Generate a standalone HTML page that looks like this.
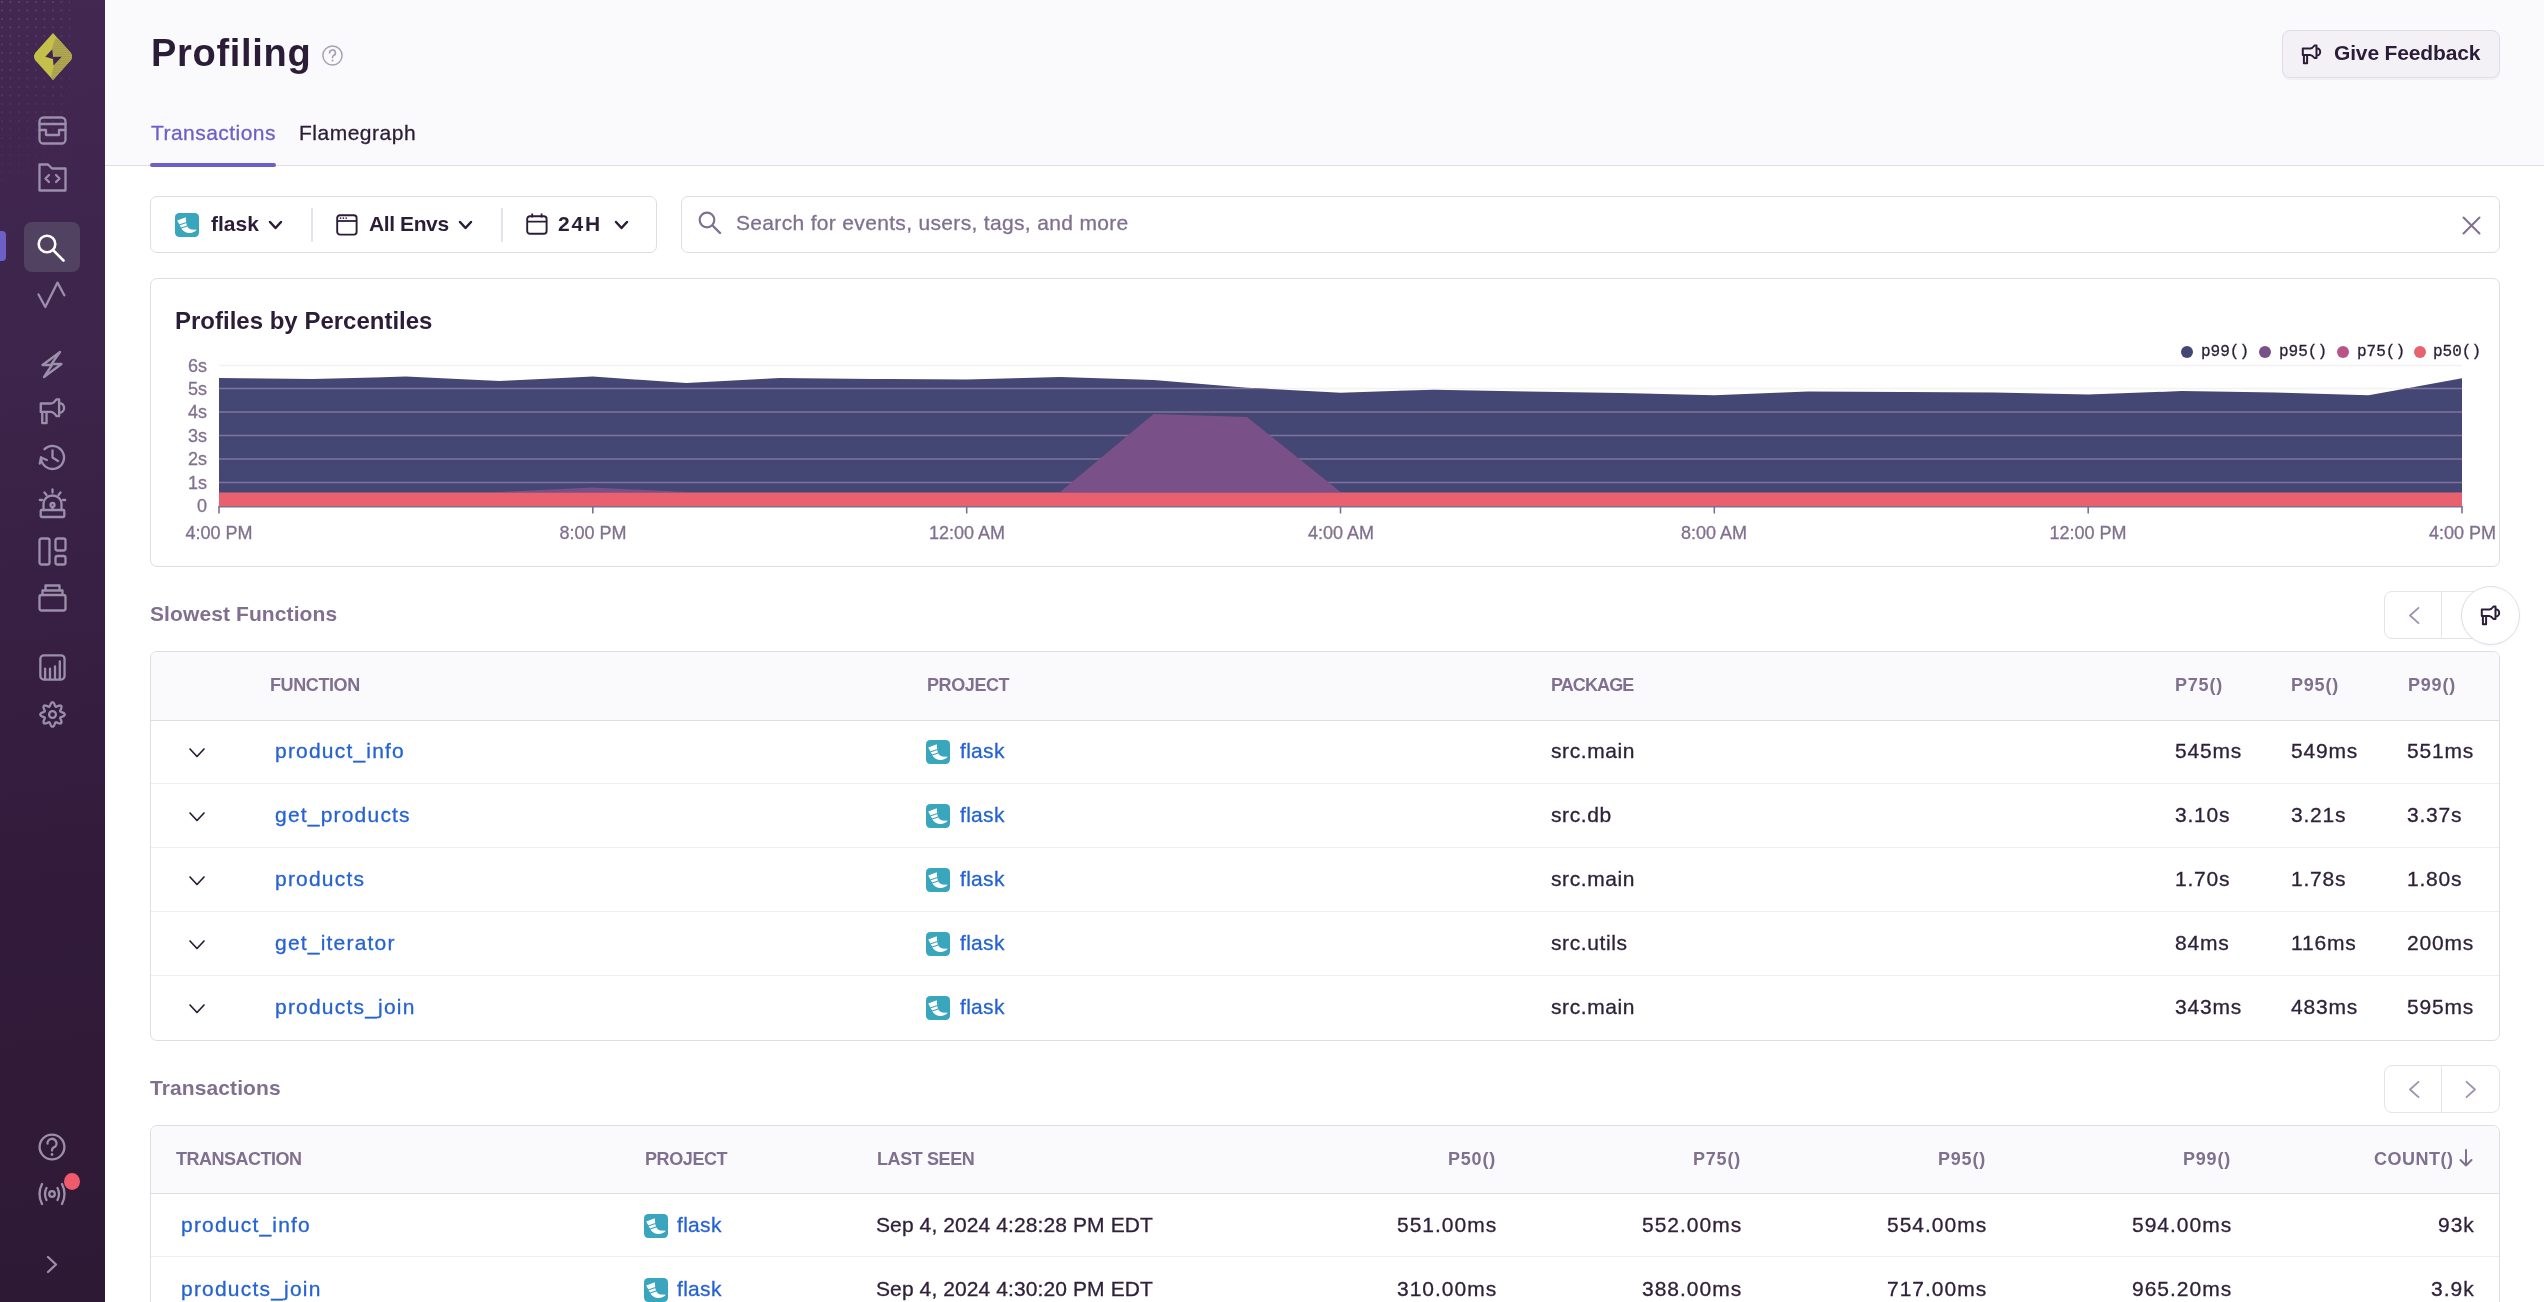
<!DOCTYPE html>
<html><head><meta charset="utf-8">
<style>
*{box-sizing:border-box;margin:0;padding:0}
html,body{width:2544px;height:1302px;overflow:hidden;background:#fff;font-family:"Liberation Sans",sans-serif;color:#3e3446}
.a{position:absolute;white-space:nowrap;line-height:1;will-change:transform}
.n{-webkit-text-stroke:0.3px currentColor}
.ico{position:absolute;display:block}
#sb{position:absolute;left:0;top:0;width:105px;height:1302px;background:linear-gradient(172deg,#432852 0%,#3c244a 30%,#321b3b 65%,#2e1935 100%)}
#hdr{position:absolute;left:105px;top:0;width:2439px;height:166px;background:#faf9fb;border-bottom:1.5px solid #e0dce5}
.box{position:absolute;border:1.5px solid #e0dce5;border-radius:7px;background:#fff}
</style></head><body>
<div id="sb"></div>
<div style="position:absolute;left:0;top:0;width:70px;height:330px;background-image:radial-gradient(circle at 2px 2px, rgba(200,170,220,0.2) 0.9px, transparent 1.3px);background-size:8.5px 8.5px;-webkit-mask-image:linear-gradient(150deg,#000 0%,rgba(0,0,0,0.5) 30%,transparent 62%)"></div>
<svg class="ico" style="left:30px;top:31px" width="46" height="52" viewBox="0 0 46 52">
<defs><pattern id="ht" width="2" height="2" patternUnits="userSpaceOnUse"><rect width="2" height="2" fill="#c4c04a"/><circle cx="1" cy="1" r="0.62" fill="#5a3f5e"/></pattern>
<clipPath id="lg"><path d="M23 2 L40.5 21.5 Q43.5 25.5 40.5 29.5 L23 49 L5.5 29.5 Q2.5 25.5 5.5 21.5 Z"/></clipPath></defs>
<path d="M23 2 L40.5 21.5 Q43.5 25.5 40.5 29.5 L23 49 L5.5 29.5 Q2.5 25.5 5.5 21.5 Z" fill="#c4c04a"/>
<g clip-path="url(#lg)"><path d="M25 8 L22 17 L25 30 L21.5 44 L21 52 L50 52 L50 0 Z" fill="url(#ht)"/></g>
<path d="M22.25 18.25 L23.25 26 L31.75 25.75 L23.5 34.5 L23 28 L15.25 25.75 Z" fill="#3e2650"/>
</svg>
<svg class="ico" style="left:38px;top:116px" width="29" height="29" viewBox="0 0 29 29"><rect x="1.5" y="1.5" width="26" height="26" rx="4" fill="none" stroke="#9b8fab" stroke-width="2.3" stroke-linecap="round" stroke-linejoin="round"/><path d="M1.5 8 H27.5 M1.5 14 H8 V19 H21 V14 H27.5" fill="none" stroke="#9b8fab" stroke-width="2.3" stroke-linecap="round" stroke-linejoin="round"/></svg>
<svg class="ico" style="left:38px;top:163px" width="29" height="29" viewBox="0 0 29 29"><path d="M1.5 1.5 H10 L14 5.5 H27.5 V27.5 H1.5 Z" fill="none" stroke="#9b8fab" stroke-width="2.3" stroke-linecap="round" stroke-linejoin="round"/><path d="M11 12 L7.5 15.5 L11 19 M18 12 L21.5 15.5 L18 19" fill="none" stroke="#9b8fab" stroke-width="2.3" stroke-linecap="round" stroke-linejoin="round"/></svg>
<div style="position:absolute;left:24px;top:222px;width:56px;height:50px;border-radius:8px;background:#524262"></div>
<div style="position:absolute;left:0;top:231px;width:6px;height:30px;border-radius:0 4px 4px 0;background:#6c5fc7"></div>
<svg class="ico" style="left:37px;top:233px" width="30" height="30" viewBox="0 0 30 30"><circle cx="10" cy="11" r="8.3" fill="none" stroke="#fff" stroke-width="2.6"/><path d="M16 17 L26.5 27.5" stroke="#fff" stroke-width="2.6" stroke-linecap="round"/></svg>
<svg class="ico" style="left:37px;top:281px" width="30" height="28" viewBox="0 0 30 28"><path d="M1.5 13.5 L8.3 26 L20.5 1.6 L27.3 14.3" fill="none" stroke="#9b8fab" stroke-width="2.3" stroke-linecap="round" stroke-linejoin="round"/></svg>
<svg class="ico" style="left:39px;top:349px" width="26" height="31" viewBox="0 0 26 31"><path d="M21 3 L3.5 16 H13 L5 28 L22.5 15 H12.5 Z" fill="none" stroke="#9b8fab" stroke-width="2.3" stroke-linecap="round" stroke-linejoin="round"/></svg>
<svg class="ico" style="left:36.6px;top:396px" width="32.2" height="30.8" viewBox="0 0 24 23"><path d="M2.8 5.6 H10.3 Q12.3 5.6 14.5 2.5 H16.5 V15 H14.5 Q12.3 11.9 10.3 11.9 H2.8 Z M16.5 5.2 A3.7 3.7 0 0 1 16.5 12.6 M3.9 11.9 V20.2 H7.1 V11.9" fill="none" stroke="#9b8fab" stroke-width="1.75" stroke-linejoin="round"/></svg>
<svg class="ico" style="left:38px;top:443px" width="29" height="29" viewBox="0 0 29 29"><path d="M3 14.5 A11.5 11.5 0 1 0 6.5 6.2" fill="none" stroke="#9b8fab" stroke-width="2.3" stroke-linecap="round" stroke-linejoin="round"/><path d="M1.8 20.5 L3 14.5 L8.8 17" fill="none" stroke="#9b8fab" stroke-width="2.3" stroke-linecap="round" stroke-linejoin="round"/><path d="M14.5 7.5 V14.5 L20 18" fill="none" stroke="#9b8fab" stroke-width="2.3" stroke-linecap="round" stroke-linejoin="round"/></svg>
<svg class="ico" style="left:37px;top:486px" width="31" height="33" viewBox="0 0 31 33"><rect x="3.7" y="24" width="23.6" height="7" rx="1" fill="none" stroke="#9b8fab" stroke-width="2.3" stroke-linecap="round" stroke-linejoin="round"/><path d="M6.5 24 V17.5 A9 8 0 0 1 24.5 17.5 V24" fill="none" stroke="#9b8fab" stroke-width="2.3" stroke-linecap="round" stroke-linejoin="round"/><circle cx="15.5" cy="19" r="2" fill="none" stroke="#9b8fab" stroke-width="2.3" stroke-linecap="round" stroke-linejoin="round"/><path d="M15.5 21 V24 M15.5 3.5 V6.5 M7.5 6.5 L9.5 9 M23.5 6.5 L21.5 9 M2.8 14 H5 M26 14 H28.2" fill="none" stroke="#9b8fab" stroke-width="2.3" stroke-linecap="round" stroke-linejoin="round"/></svg>
<svg class="ico" style="left:38px;top:537px" width="29" height="29" viewBox="0 0 29 29"><rect x="1.5" y="1.5" width="10" height="26" rx="2" fill="none" stroke="#9b8fab" stroke-width="2.3" stroke-linecap="round" stroke-linejoin="round"/><rect x="17.5" y="1.5" width="10" height="12" rx="2" fill="none" stroke="#9b8fab" stroke-width="2.3" stroke-linecap="round" stroke-linejoin="round"/><rect x="17.5" y="19" width="10" height="8.5" rx="2" fill="none" stroke="#9b8fab" stroke-width="2.3" stroke-linecap="round" stroke-linejoin="round"/></svg>
<svg class="ico" style="left:38px;top:584px" width="29" height="28" viewBox="0 0 29 28"><rect x="1.5" y="11" width="26" height="15.5" rx="2" fill="none" stroke="#9b8fab" stroke-width="2.3" stroke-linecap="round" stroke-linejoin="round"/><path d="M4.5 11 V6.5 H24.5 V11 M7.5 6.5 V1.5 H21.5 V6.5" fill="none" stroke="#9b8fab" stroke-width="2.3" stroke-linecap="round" stroke-linejoin="round"/></svg>
<svg class="ico" style="left:38px;top:653px" width="29" height="29" viewBox="0 0 29 29"><rect x="2.35" y="2.35" width="24.2" height="24.2" rx="3.5" fill="none" stroke="#9b8fab" stroke-width="2.3" stroke-linecap="round" stroke-linejoin="round"/><path d="M7.1 26 V15.6 M12 26 V15.6 M17 26 V13.3 M21.8 26 V8.3" fill="none" stroke="#9b8fab" stroke-width="2.3" stroke-linecap="round" stroke-linejoin="round"/></svg>
<svg class="ico" style="left:37.8px;top:700px" width="29" height="29" viewBox="0 0 29 29"><polygon points="26.70,14.50 26.52,15.13 26.01,15.71 25.25,16.20 24.38,16.60 23.53,16.92 22.83,17.21 22.38,17.53 22.21,17.93 22.31,18.48 22.60,19.17 22.97,20.00 23.31,20.90 23.49,21.78 23.44,22.55 23.13,23.13 22.55,23.44 21.78,23.49 20.90,23.31 20.00,22.97 19.18,22.60 18.48,22.31 17.93,22.21 17.53,22.38 17.21,22.83 16.92,23.53 16.60,24.38 16.20,25.25 15.71,26.01 15.13,26.52 14.50,26.70 13.87,26.52 13.29,26.01 12.80,25.25 12.40,24.38 12.08,23.53 11.79,22.83 11.47,22.38 11.07,22.21 10.52,22.31 9.83,22.60 9.00,22.97 8.10,23.31 7.22,23.49 6.45,23.44 5.87,23.13 5.56,22.55 5.51,21.78 5.69,20.90 6.03,20.00 6.40,19.17 6.69,18.48 6.79,17.93 6.62,17.53 6.17,17.21 5.47,16.92 4.62,16.60 3.75,16.20 2.99,15.71 2.48,15.13 2.30,14.50 2.48,13.87 2.99,13.29 3.75,12.80 4.62,12.40 5.47,12.08 6.17,11.79 6.62,11.47 6.79,11.07 6.69,10.52 6.40,9.83 6.03,9.00 5.69,8.10 5.51,7.22 5.56,6.45 5.87,5.87 6.45,5.56 7.22,5.51 8.10,5.69 9.00,6.03 9.82,6.40 10.52,6.69 11.07,6.79 11.47,6.62 11.79,6.17 12.08,5.47 12.40,4.62 12.80,3.75 13.29,2.99 13.87,2.48 14.50,2.30 15.13,2.48 15.71,2.99 16.20,3.75 16.60,4.62 16.92,5.47 17.21,6.17 17.53,6.62 17.93,6.79 18.48,6.69 19.18,6.40 20.00,6.03 20.90,5.69 21.78,5.51 22.55,5.56 23.13,5.87 23.44,6.45 23.49,7.22 23.31,8.10 22.97,9.00 22.60,9.83 22.31,10.52 22.21,11.07 22.38,11.47 22.83,11.79 23.53,12.08 24.38,12.40 25.25,12.80 26.01,13.29 26.52,13.87" fill="none" stroke="#9b8fab" stroke-width="2.3" stroke-linecap="round" stroke-linejoin="round"/><circle cx="14.5" cy="14.5" r="3.4" fill="none" stroke="#9b8fab" stroke-width="2.3" stroke-linecap="round" stroke-linejoin="round"/></svg>
<svg class="ico" style="left:37px;top:1132px" width="30" height="30" viewBox="0 0 30 30"><circle cx="15" cy="15" r="12.4" fill="none" stroke="#9b8fab" stroke-width="2.3" stroke-linecap="round" stroke-linejoin="round"/><path d="M10.5 11.5 A4.5 4.5 0 1 1 16.5 15.5 Q15 16.3 15 18.5" fill="none" stroke="#9b8fab" stroke-width="2.3" stroke-linecap="round" stroke-linejoin="round"/><circle cx="15" cy="22.5" r="1.4" fill="#9b8fab"/></svg>
<svg class="ico" style="left:37px;top:1182px" width="30" height="24" viewBox="0 0 30 24"><circle cx="15" cy="12" r="2.8" fill="none" stroke="#9b8fab" stroke-width="2.3" stroke-linecap="round" stroke-linejoin="round"/><path d="M9.5 6 Q6.5 12 9.5 18 M20.5 6 Q23.5 12 20.5 18 M5 2 Q0 12 5 22 M25 2 Q30 12 25 22" fill="none" stroke="#9b8fab" stroke-width="2.3" stroke-linecap="round" stroke-linejoin="round"/></svg>
<div style="position:absolute;left:64px;top:1173px;width:16px;height:17px;border-radius:50%;background:#ef5b6c"></div>
<svg class="ico" style="left:45px;top:1255px" width="14" height="19" viewBox="0 0 14 19"><path d="M3 2 L11 9.5 L3 17" fill="none" stroke="#9b8fab" stroke-width="2.3" stroke-linecap="round" stroke-linejoin="round"/></svg>
<div id="hdr"></div>
<div class="a" style="left:151.0px;top:34.2px;font-size:38px;font-weight:bold;color:#2b1d38;letter-spacing:0.7px;font-family:'Liberation Sans';">Profiling</div>
<svg class="ico" style="left:321px;top:44px" width="23" height="23" viewBox="0 0 23 23"><circle cx="11.5" cy="11.5" r="9.6" fill="none" stroke="#aaa0b6" stroke-width="1.5"/><path d="M8.6 9 A2.9 2.9 0 1 1 12.4 11.6 Q11.5 12.2 11.5 13.6" fill="none" stroke="#a79db5" stroke-width="1.6" stroke-linecap="round"/><circle cx="11.5" cy="16.4" r="1" fill="#a79db5"/></svg>
<div class="a n" style="left:150.5px;top:122.2px;font-size:21px;font-weight:normal;color:#6c5fc7;letter-spacing:0.45px;font-family:'Liberation Sans';">Transactions</div>
<div class="a n" style="left:299.0px;top:122.2px;font-size:21px;font-weight:normal;color:#2b1d38;letter-spacing:0.5px;font-family:'Liberation Sans';">Flamegraph</div>
<div style="position:absolute;left:150px;top:162.5px;width:126px;height:4.5px;border-radius:3px;background:#6c5fc7"></div>
<div class="box" style="left:2282px;top:30px;width:218px;height:48px;border-radius:8px;background:#f3f1f6;box-shadow:0 2px 0 rgba(43,34,51,0.04)"></div>
<svg class="ico" style="left:2300px;top:43px" width="24" height="23" viewBox="0 0 24 23"><path d="M2.8 5.6 H10.3 Q12.3 5.6 14.5 2.5 H16.5 V15 H14.5 Q12.3 11.9 10.3 11.9 H2.8 Z M16.5 5.2 A3.7 3.7 0 0 1 16.5 12.6 M3.9 11.9 V20.2 H7.1 V11.9" fill="none" stroke="#2b1d38" stroke-width="2" stroke-linejoin="round"/></svg>
<div class="a" style="left:2334.0px;top:42.4px;font-size:21px;font-weight:bold;color:#2b1d38;letter-spacing:-0.15px;font-family:'Liberation Sans';">Give Feedback</div>
<div class="box" style="left:150px;top:196px;width:507px;height:57px"></div>
<svg class="ico" style="left:175px;top:213px" width="24" height="24" viewBox="0 0 24 24"><rect width="24" height="24" rx="4.2" fill="#39a6be"/><path d="M2.2 7.5 L10.8 4.2 L11.2 9.5 C11.6 13 13 15.6 16.2 16.6 L21.8 16.8 C20.6 18.8 17.5 20 14.5 20 C11 20 8.6 18.4 7.1 16.5 Z" fill="#fff"/><path d="M4.0 12.0 L11.6 9.4 M5.4 15.2 L12.2 12.9" stroke="#39a6be" stroke-width="1.1"/></svg>
<div class="a" style="left:211.0px;top:213.0px;font-size:21px;font-weight:bold;color:#2b1d38;letter-spacing:0px;font-family:'Liberation Sans';">flask</div>
<svg class="ico" style="left:269px;top:221px;overflow:visible" width="13" height="8" viewBox="0 0 13 8"><path d="M1 1 L6.5 7 L12 1" fill="none" stroke="#2b1d38" stroke-width="2.5" stroke-linecap="round" stroke-linejoin="round"/></svg>
<div style="position:absolute;left:311px;top:208px;width:1.5px;height:34px;background:#e6e2ea"></div>
<svg class="ico" style="left:335.5px;top:213.5px" width="22" height="22" viewBox="0 0 22 22"><rect x="1.2" y="1.2" width="19.4" height="19.4" rx="2.8" fill="none" stroke="#2b1d38" stroke-width="1.9"/><path d="M1.2 7 H20.6" stroke="#2b1d38" stroke-width="1.8"/><circle cx="4.6" cy="4.1" r="0.85" fill="#2b1d38"/><circle cx="7.4" cy="4.1" r="0.85" fill="#2b1d38"/><circle cx="10.2" cy="4.1" r="0.85" fill="#2b1d38"/></svg>
<div class="a" style="left:369.0px;top:213.0px;font-size:21px;font-weight:bold;color:#2b1d38;letter-spacing:-0.4px;font-family:'Liberation Sans';">All Envs</div>
<svg class="ico" style="left:459px;top:221px;overflow:visible" width="13" height="8" viewBox="0 0 13 8"><path d="M1 1 L6.5 7 L12 1" fill="none" stroke="#2b1d38" stroke-width="2.5" stroke-linecap="round" stroke-linejoin="round"/></svg>
<div style="position:absolute;left:501px;top:208px;width:1.5px;height:34px;background:#e6e2ea"></div>
<svg class="ico" style="left:525.5px;top:213px" width="22" height="22" viewBox="0 0 22 22"><rect x="1.2" y="3.2" width="19.4" height="17.6" rx="2.8" fill="none" stroke="#2b1d38" stroke-width="1.9"/><path d="M1.2 8.6 H20.6 M6.2 0.6 V4.6 M15.6 0.6 V4.6" stroke="#2b1d38" stroke-width="1.8"/></svg>
<div class="a" style="left:558.0px;top:213.0px;font-size:21px;font-weight:bold;color:#2b1d38;letter-spacing:1.8px;font-family:'Liberation Sans';">24H</div>
<svg class="ico" style="left:615px;top:221px;overflow:visible" width="13" height="8" viewBox="0 0 13 8"><path d="M1 1 L6.5 7 L12 1" fill="none" stroke="#2b1d38" stroke-width="2.5" stroke-linecap="round" stroke-linejoin="round"/></svg>
<div class="box" style="left:681px;top:196px;width:1819px;height:57px"></div>
<svg class="ico" style="left:698px;top:211px" width="24" height="23" viewBox="0 0 24 23"><circle cx="9" cy="9" r="7.3" fill="none" stroke="#80708f" stroke-width="2.2"/><path d="M14.5 14.5 L22 22" stroke="#80708f" stroke-width="2.4" stroke-linecap="round"/></svg>
<div class="a n" style="left:735.5px;top:212.0px;font-size:21px;font-weight:normal;color:#80708f;letter-spacing:0.33px;font-family:'Liberation Sans';">Search for events, users, tags, and more</div>
<svg class="ico" style="left:2462px;top:216px" width="19" height="19" viewBox="0 0 19 19"><path d="M1.5 1.5 L17.5 17.5 M17.5 1.5 L1.5 17.5" stroke="#80708f" stroke-width="2" stroke-linecap="round"/></svg>
<div class="box" style="left:150px;top:278px;width:2350px;height:289px"></div>
<div class="a" style="left:175.0px;top:309.4px;font-size:24px;font-weight:bold;color:#2b1d38;letter-spacing:0.0px;font-family:'Liberation Sans';">Profiles by Percentiles</div>
<div style="position:absolute;left:2181px;top:346px;width:12px;height:12px;border-radius:50%;background:#444674"></div>
<div class="a n" style="left:2200.5px;top:343.8px;font-size:16px;font-weight:normal;color:#2b1d38;letter-spacing:0px;font-family:'Liberation Mono';">p99()</div>
<div style="position:absolute;left:2259px;top:346px;width:12px;height:12px;border-radius:50%;background:#7a5088"></div>
<div class="a n" style="left:2278.5px;top:343.8px;font-size:16px;font-weight:normal;color:#2b1d38;letter-spacing:0px;font-family:'Liberation Mono';">p95()</div>
<div style="position:absolute;left:2337px;top:346px;width:12px;height:12px;border-radius:50%;background:#b85586"></div>
<div class="a n" style="left:2356.5px;top:343.8px;font-size:16px;font-weight:normal;color:#2b1d38;letter-spacing:0px;font-family:'Liberation Mono';">p75()</div>
<div style="position:absolute;left:2414px;top:346px;width:12px;height:12px;border-radius:50%;background:#e9626e"></div>
<div class="a n" style="left:2432.5px;top:343.8px;font-size:16px;font-weight:normal;color:#2b1d38;letter-spacing:0px;font-family:'Liberation Mono';">p50()</div>
<svg class="ico" style="left:0;top:0" width="2544" height="600" viewBox="0 0 2544 600">
<defs><clipPath id="c99"><polygon points="219.0,378.1 312.5,378.9 405.9,376.6 499.4,380.9 592.8,376.4 686.3,383.1 779.8,378.1 873.2,379.0 966.7,379.4 1060.1,376.9 1153.6,380.1 1247.0,387.7 1340.5,392.7 1434.0,389.7 1527.4,391.5 1620.9,393.0 1714.3,395.2 1807.8,391.4 1901.2,392.0 1994.7,392.6 2088.2,394.5 2181.6,391.1 2275.1,392.5 2368.5,395.3 2462.0,378.3 2462.0,506.0 219.0,506.0"/></clipPath></defs>
<line x1="219.0" x2="2462.0" y1="365.5" y2="365.5" stroke="#f4f1f6" stroke-width="1.5"/><line x1="219.0" x2="2462.0" y1="388.5" y2="388.5" stroke="#f4f1f6" stroke-width="1.5"/><line x1="219.0" x2="2462.0" y1="412" y2="412" stroke="#f4f1f6" stroke-width="1.5"/><line x1="219.0" x2="2462.0" y1="435.5" y2="435.5" stroke="#f4f1f6" stroke-width="1.5"/><line x1="219.0" x2="2462.0" y1="459" y2="459" stroke="#f4f1f6" stroke-width="1.5"/><line x1="219.0" x2="2462.0" y1="482.5" y2="482.5" stroke="#f4f1f6" stroke-width="1.5"/>
<polygon points="219.0,378.1 312.5,378.9 405.9,376.6 499.4,380.9 592.8,376.4 686.3,383.1 779.8,378.1 873.2,379.0 966.7,379.4 1060.1,376.9 1153.6,380.1 1247.0,387.7 1340.5,392.7 1434.0,389.7 1527.4,391.5 1620.9,393.0 1714.3,395.2 1807.8,391.4 1901.2,392.0 1994.7,392.6 2088.2,394.5 2181.6,391.1 2275.1,392.5 2368.5,395.3 2462.0,378.3 2462.0,506.0 219.0,506.0" fill="#444674"/>
<g clip-path="url(#c99)"><line x1="219.0" x2="2462.0" y1="388.5" y2="388.5" stroke="#7c749c" stroke-width="1.6"/><line x1="219.0" x2="2462.0" y1="412" y2="412" stroke="#7c749c" stroke-width="1.6"/><line x1="219.0" x2="2462.0" y1="435.5" y2="435.5" stroke="#7c749c" stroke-width="1.6"/><line x1="219.0" x2="2462.0" y1="459" y2="459" stroke="#7c749c" stroke-width="1.6"/><line x1="219.0" x2="2462.0" y1="482.5" y2="482.5" stroke="#7c749c" stroke-width="1.6"/></g>
<polygon points="219.0,492.0 499.4,492.0 592.8,487.5 686.3,492.0 1060.1,492.0 1153.6,414.0 1247.0,417.0 1340.5,492.0 2462.0,492.0 2462.0,506.0 219.0,506.0" fill="#7a5088"/>
<rect x="219.0" y="492.7" width="2243.0" height="13.300000000000011" fill="#e9606e"/>
<line x1="218.5" x2="2462.5" y1="506.8" y2="506.8" stroke="#80708f" stroke-width="1.6"/>
<line x1="219.0" x2="219.0" y1="506.0" y2="513.5" stroke="#80708f" stroke-width="1.6"/><line x1="592.8" x2="592.8" y1="506.0" y2="513.5" stroke="#80708f" stroke-width="1.6"/><line x1="966.7" x2="966.7" y1="506.0" y2="513.5" stroke="#80708f" stroke-width="1.6"/><line x1="1340.5" x2="1340.5" y1="506.0" y2="513.5" stroke="#80708f" stroke-width="1.6"/><line x1="1714.3" x2="1714.3" y1="506.0" y2="513.5" stroke="#80708f" stroke-width="1.6"/><line x1="2088.2" x2="2088.2" y1="506.0" y2="513.5" stroke="#80708f" stroke-width="1.6"/><line x1="2462.0" x2="2462.0" y1="506.0" y2="513.5" stroke="#80708f" stroke-width="1.6"/>
</svg>
<div class="a n" style="right:2337.0px;top:356.6px;font-size:18px;font-weight:normal;color:#80708f;letter-spacing:0px;text-align:right;">6s</div>
<div class="a n" style="right:2337.0px;top:379.6px;font-size:18px;font-weight:normal;color:#80708f;letter-spacing:0px;text-align:right;">5s</div>
<div class="a n" style="right:2337.0px;top:403.1px;font-size:18px;font-weight:normal;color:#80708f;letter-spacing:0px;text-align:right;">4s</div>
<div class="a n" style="right:2337.0px;top:426.6px;font-size:18px;font-weight:normal;color:#80708f;letter-spacing:0px;text-align:right;">3s</div>
<div class="a n" style="right:2337.0px;top:450.1px;font-size:18px;font-weight:normal;color:#80708f;letter-spacing:0px;text-align:right;">2s</div>
<div class="a n" style="right:2337.0px;top:473.6px;font-size:18px;font-weight:normal;color:#80708f;letter-spacing:0px;text-align:right;">1s</div>
<div class="a n" style="right:2337.0px;top:497.1px;font-size:18px;font-weight:normal;color:#80708f;letter-spacing:0px;text-align:right;">0</div>
<div class="a n" style="left:119.0px;width:200px;text-align:center;top:523.9px;font-size:18px;color:#80708f;letter-spacing:0px">4:00 PM</div>
<div class="a n" style="left:492.8px;width:200px;text-align:center;top:523.9px;font-size:18px;color:#80708f;letter-spacing:0px">8:00 PM</div>
<div class="a n" style="left:866.7px;width:200px;text-align:center;top:523.9px;font-size:18px;color:#80708f;letter-spacing:0px">12:00 AM</div>
<div class="a n" style="left:1240.5px;width:200px;text-align:center;top:523.9px;font-size:18px;color:#80708f;letter-spacing:0px">4:00 AM</div>
<div class="a n" style="left:1614.3px;width:200px;text-align:center;top:523.9px;font-size:18px;color:#80708f;letter-spacing:0px">8:00 AM</div>
<div class="a n" style="left:1988.2px;width:200px;text-align:center;top:523.9px;font-size:18px;color:#80708f;letter-spacing:0px">12:00 PM</div>
<div class="a n" style="right:48.0px;top:523.9px;font-size:18px;font-weight:normal;color:#80708f;letter-spacing:0px;text-align:right;">4:00 PM</div>
<div class="a" style="left:150.0px;top:602.5px;font-size:21px;font-weight:bold;color:#80708f;letter-spacing:0.1px;font-family:'Liberation Sans';">Slowest Functions</div>
<div class="box" style="left:2384px;top:591px;width:116px;height:48px;border-radius:8px;border-color:#e6e2ea"></div>
<div style="position:absolute;left:2441px;top:591px;width:1.2px;height:48px;background:#e6e2ea"></div>
<svg class="ico" style="left:2407.5px;top:606px" width="13" height="19" viewBox="0 0 13 19"><path d="M10.5 1.8 L2 9.5 L10.5 17.2" fill="none" stroke="#9f93ad" stroke-width="1.8" stroke-linecap="round" stroke-linejoin="round"/></svg>
<svg class="ico" style="left:2464px;top:606px" width="13" height="19" viewBox="0 0 13 19"><path d="M2.5 1.8 L11 9.5 L2.5 17.2" fill="none" stroke="#9f93ad" stroke-width="1.8" stroke-linecap="round" stroke-linejoin="round"/></svg>
<div style="position:absolute;left:2461px;top:586px;width:59px;height:59px;border-radius:50%;background:#fff;border:1.5px solid #e0dce5;box-shadow:0 1px 3px rgba(0,0,0,0.04)"></div>
<svg class="ico" style="left:2479.2px;top:603.5px" width="24" height="23" viewBox="0 0 24 23"><path d="M2.8 5.6 H10.3 Q12.3 5.6 14.5 2.5 H16.5 V15 H14.5 Q12.3 11.9 10.3 11.9 H2.8 Z M16.5 5.2 A3.7 3.7 0 0 1 16.5 12.6 M3.9 11.9 V20.2 H7.1 V11.9" fill="none" stroke="#2b1d38" stroke-width="2" stroke-linejoin="round"/></svg>
<div class="box" style="left:150px;top:651px;width:2350px;height:390px;overflow:hidden;border-radius:7px"><div style="position:absolute;left:0;top:0;width:100%;height:68.5px;background:#faf9fb;border-bottom:1.5px solid #e0dce5"></div><div style="position:absolute;left:0;top:131.0px;width:100%;height:1.2px;background:#efecf2"></div><div style="position:absolute;left:0;top:195.0px;width:100%;height:1.2px;background:#efecf2"></div><div style="position:absolute;left:0;top:259.0px;width:100%;height:1.2px;background:#efecf2"></div><div style="position:absolute;left:0;top:323.0px;width:100%;height:1.2px;background:#efecf2"></div></div>
<div class="a" style="left:269.5px;top:675.6px;font-size:18px;font-weight:bold;color:#80708f;letter-spacing:-0.4px;font-family:'Liberation Sans';">FUNCTION</div>
<div class="a" style="left:927.0px;top:675.6px;font-size:18px;font-weight:bold;color:#80708f;letter-spacing:-0.4px;font-family:'Liberation Sans';">PROJECT</div>
<div class="a" style="left:1551.0px;top:675.6px;font-size:18px;font-weight:bold;color:#80708f;letter-spacing:-0.9px;font-family:'Liberation Sans';">PACKAGE</div>
<div class="a" style="left:2175.0px;top:675.6px;font-size:18px;font-weight:bold;color:#80708f;letter-spacing:0.8px;font-family:'Liberation Sans';">P75()</div>
<div class="a" style="left:2291.0px;top:675.6px;font-size:18px;font-weight:bold;color:#80708f;letter-spacing:0.8px;font-family:'Liberation Sans';">P95()</div>
<div class="a" style="left:2407.5px;top:675.6px;font-size:18px;font-weight:bold;color:#80708f;letter-spacing:0.8px;font-family:'Liberation Sans';">P99()</div>
<svg class="ico" style="left:189px;top:747.5px;overflow:visible" width="16" height="9.5" viewBox="0 0 16 9.5"><path d="M1 1 L8.0 8.5 L15 1" fill="none" stroke="#2b1d38" stroke-width="1.7" stroke-linecap="round" stroke-linejoin="round"/></svg>
<div class="a n" style="left:274.5px;top:740.0px;font-size:21px;font-weight:normal;color:#2562d4;letter-spacing:1.2px;font-family:'Liberation Sans';">product_info</div>
<svg class="ico" style="left:926px;top:740px" width="24" height="24" viewBox="0 0 24 24"><rect width="24" height="24" rx="4.2" fill="#39a6be"/><path d="M2.2 7.5 L10.8 4.2 L11.2 9.5 C11.6 13 13 15.6 16.2 16.6 L21.8 16.8 C20.6 18.8 17.5 20 14.5 20 C11 20 8.6 18.4 7.1 16.5 Z" fill="#fff"/><path d="M4.0 12.0 L11.6 9.4 M5.4 15.2 L12.2 12.9" stroke="#39a6be" stroke-width="1.1"/></svg>
<div class="a n" style="left:959.5px;top:740.0px;font-size:21px;font-weight:normal;color:#2562d4;letter-spacing:0.3px;font-family:'Liberation Sans';">flask</div>
<div class="a n" style="left:1550.5px;top:740.0px;font-size:21px;font-weight:normal;color:#2f213a;letter-spacing:0.6px;font-family:'Liberation Sans';">src.main</div>
<div class="a n" style="left:2174.5px;top:740.0px;font-size:21px;font-weight:normal;color:#2f213a;letter-spacing:0.8px;font-family:'Liberation Sans';">545ms</div>
<div class="a n" style="left:2290.5px;top:740.0px;font-size:21px;font-weight:normal;color:#2f213a;letter-spacing:0.8px;font-family:'Liberation Sans';">549ms</div>
<div class="a n" style="left:2406.5px;top:740.0px;font-size:21px;font-weight:normal;color:#2f213a;letter-spacing:0.8px;font-family:'Liberation Sans';">551ms</div>
<svg class="ico" style="left:189px;top:811.5px;overflow:visible" width="16" height="9.5" viewBox="0 0 16 9.5"><path d="M1 1 L8.0 8.5 L15 1" fill="none" stroke="#2b1d38" stroke-width="1.7" stroke-linecap="round" stroke-linejoin="round"/></svg>
<div class="a n" style="left:274.5px;top:804.0px;font-size:21px;font-weight:normal;color:#2562d4;letter-spacing:1.2px;font-family:'Liberation Sans';">get_products</div>
<svg class="ico" style="left:926px;top:804px" width="24" height="24" viewBox="0 0 24 24"><rect width="24" height="24" rx="4.2" fill="#39a6be"/><path d="M2.2 7.5 L10.8 4.2 L11.2 9.5 C11.6 13 13 15.6 16.2 16.6 L21.8 16.8 C20.6 18.8 17.5 20 14.5 20 C11 20 8.6 18.4 7.1 16.5 Z" fill="#fff"/><path d="M4.0 12.0 L11.6 9.4 M5.4 15.2 L12.2 12.9" stroke="#39a6be" stroke-width="1.1"/></svg>
<div class="a n" style="left:959.5px;top:804.0px;font-size:21px;font-weight:normal;color:#2562d4;letter-spacing:0.3px;font-family:'Liberation Sans';">flask</div>
<div class="a n" style="left:1550.5px;top:804.0px;font-size:21px;font-weight:normal;color:#2f213a;letter-spacing:0.6px;font-family:'Liberation Sans';">src.db</div>
<div class="a n" style="left:2174.5px;top:804.0px;font-size:21px;font-weight:normal;color:#2f213a;letter-spacing:0.8px;font-family:'Liberation Sans';">3.10s</div>
<div class="a n" style="left:2290.5px;top:804.0px;font-size:21px;font-weight:normal;color:#2f213a;letter-spacing:0.8px;font-family:'Liberation Sans';">3.21s</div>
<div class="a n" style="left:2406.5px;top:804.0px;font-size:21px;font-weight:normal;color:#2f213a;letter-spacing:0.8px;font-family:'Liberation Sans';">3.37s</div>
<svg class="ico" style="left:189px;top:875.5px;overflow:visible" width="16" height="9.5" viewBox="0 0 16 9.5"><path d="M1 1 L8.0 8.5 L15 1" fill="none" stroke="#2b1d38" stroke-width="1.7" stroke-linecap="round" stroke-linejoin="round"/></svg>
<div class="a n" style="left:274.5px;top:868.0px;font-size:21px;font-weight:normal;color:#2562d4;letter-spacing:1.2px;font-family:'Liberation Sans';">products</div>
<svg class="ico" style="left:926px;top:868px" width="24" height="24" viewBox="0 0 24 24"><rect width="24" height="24" rx="4.2" fill="#39a6be"/><path d="M2.2 7.5 L10.8 4.2 L11.2 9.5 C11.6 13 13 15.6 16.2 16.6 L21.8 16.8 C20.6 18.8 17.5 20 14.5 20 C11 20 8.6 18.4 7.1 16.5 Z" fill="#fff"/><path d="M4.0 12.0 L11.6 9.4 M5.4 15.2 L12.2 12.9" stroke="#39a6be" stroke-width="1.1"/></svg>
<div class="a n" style="left:959.5px;top:868.0px;font-size:21px;font-weight:normal;color:#2562d4;letter-spacing:0.3px;font-family:'Liberation Sans';">flask</div>
<div class="a n" style="left:1550.5px;top:868.0px;font-size:21px;font-weight:normal;color:#2f213a;letter-spacing:0.6px;font-family:'Liberation Sans';">src.main</div>
<div class="a n" style="left:2174.5px;top:868.0px;font-size:21px;font-weight:normal;color:#2f213a;letter-spacing:0.8px;font-family:'Liberation Sans';">1.70s</div>
<div class="a n" style="left:2290.5px;top:868.0px;font-size:21px;font-weight:normal;color:#2f213a;letter-spacing:0.8px;font-family:'Liberation Sans';">1.78s</div>
<div class="a n" style="left:2406.5px;top:868.0px;font-size:21px;font-weight:normal;color:#2f213a;letter-spacing:0.8px;font-family:'Liberation Sans';">1.80s</div>
<svg class="ico" style="left:189px;top:939.5px;overflow:visible" width="16" height="9.5" viewBox="0 0 16 9.5"><path d="M1 1 L8.0 8.5 L15 1" fill="none" stroke="#2b1d38" stroke-width="1.7" stroke-linecap="round" stroke-linejoin="round"/></svg>
<div class="a n" style="left:274.5px;top:932.0px;font-size:21px;font-weight:normal;color:#2562d4;letter-spacing:1.2px;font-family:'Liberation Sans';">get_iterator</div>
<svg class="ico" style="left:926px;top:932px" width="24" height="24" viewBox="0 0 24 24"><rect width="24" height="24" rx="4.2" fill="#39a6be"/><path d="M2.2 7.5 L10.8 4.2 L11.2 9.5 C11.6 13 13 15.6 16.2 16.6 L21.8 16.8 C20.6 18.8 17.5 20 14.5 20 C11 20 8.6 18.4 7.1 16.5 Z" fill="#fff"/><path d="M4.0 12.0 L11.6 9.4 M5.4 15.2 L12.2 12.9" stroke="#39a6be" stroke-width="1.1"/></svg>
<div class="a n" style="left:959.5px;top:932.0px;font-size:21px;font-weight:normal;color:#2562d4;letter-spacing:0.3px;font-family:'Liberation Sans';">flask</div>
<div class="a n" style="left:1550.5px;top:932.0px;font-size:21px;font-weight:normal;color:#2f213a;letter-spacing:0.6px;font-family:'Liberation Sans';">src.utils</div>
<div class="a n" style="left:2174.5px;top:932.0px;font-size:21px;font-weight:normal;color:#2f213a;letter-spacing:0.8px;font-family:'Liberation Sans';">84ms</div>
<div class="a n" style="left:2290.5px;top:932.0px;font-size:21px;font-weight:normal;color:#2f213a;letter-spacing:0.8px;font-family:'Liberation Sans';">116ms</div>
<div class="a n" style="left:2406.5px;top:932.0px;font-size:21px;font-weight:normal;color:#2f213a;letter-spacing:0.8px;font-family:'Liberation Sans';">200ms</div>
<svg class="ico" style="left:189px;top:1003.5px;overflow:visible" width="16" height="9.5" viewBox="0 0 16 9.5"><path d="M1 1 L8.0 8.5 L15 1" fill="none" stroke="#2b1d38" stroke-width="1.7" stroke-linecap="round" stroke-linejoin="round"/></svg>
<div class="a n" style="left:274.5px;top:996.0px;font-size:21px;font-weight:normal;color:#2562d4;letter-spacing:1.2px;font-family:'Liberation Sans';">products_join</div>
<svg class="ico" style="left:926px;top:996px" width="24" height="24" viewBox="0 0 24 24"><rect width="24" height="24" rx="4.2" fill="#39a6be"/><path d="M2.2 7.5 L10.8 4.2 L11.2 9.5 C11.6 13 13 15.6 16.2 16.6 L21.8 16.8 C20.6 18.8 17.5 20 14.5 20 C11 20 8.6 18.4 7.1 16.5 Z" fill="#fff"/><path d="M4.0 12.0 L11.6 9.4 M5.4 15.2 L12.2 12.9" stroke="#39a6be" stroke-width="1.1"/></svg>
<div class="a n" style="left:959.5px;top:996.0px;font-size:21px;font-weight:normal;color:#2562d4;letter-spacing:0.3px;font-family:'Liberation Sans';">flask</div>
<div class="a n" style="left:1550.5px;top:996.0px;font-size:21px;font-weight:normal;color:#2f213a;letter-spacing:0.6px;font-family:'Liberation Sans';">src.main</div>
<div class="a n" style="left:2174.5px;top:996.0px;font-size:21px;font-weight:normal;color:#2f213a;letter-spacing:0.8px;font-family:'Liberation Sans';">343ms</div>
<div class="a n" style="left:2290.5px;top:996.0px;font-size:21px;font-weight:normal;color:#2f213a;letter-spacing:0.8px;font-family:'Liberation Sans';">483ms</div>
<div class="a n" style="left:2406.5px;top:996.0px;font-size:21px;font-weight:normal;color:#2f213a;letter-spacing:0.8px;font-family:'Liberation Sans';">595ms</div>
<div class="a" style="left:150.0px;top:1077.0px;font-size:21px;font-weight:bold;color:#80708f;letter-spacing:0.1px;font-family:'Liberation Sans';">Transactions</div>
<div class="box" style="left:2384px;top:1064.5px;width:116px;height:48px;border-radius:8px;border-color:#e6e2ea"></div>
<div style="position:absolute;left:2441px;top:1064.5px;width:1.2px;height:48px;background:#e6e2ea"></div>
<svg class="ico" style="left:2407.5px;top:1079.5px" width="13" height="19" viewBox="0 0 13 19"><path d="M10.5 1.8 L2 9.5 L10.5 17.2" fill="none" stroke="#9f93ad" stroke-width="1.8" stroke-linecap="round" stroke-linejoin="round"/></svg>
<svg class="ico" style="left:2464px;top:1079.5px" width="13" height="19" viewBox="0 0 13 19"><path d="M2.5 1.8 L11 9.5 L2.5 17.2" fill="none" stroke="#9f93ad" stroke-width="1.8" stroke-linecap="round" stroke-linejoin="round"/></svg>
<div class="box" style="left:150px;top:1125px;width:2350px;height:400px;overflow:hidden;border-radius:7px"><div style="position:absolute;left:0;top:0;width:100%;height:67.5px;background:#faf9fb;border-bottom:1.5px solid #e0dce5"></div><div style="position:absolute;left:0;top:130.0px;width:100%;height:1.2px;background:#efecf2"></div><div style="position:absolute;left:0;top:194.0px;width:100%;height:1.2px;background:#efecf2"></div></div>
<div class="a" style="left:176.0px;top:1150.1px;font-size:18px;font-weight:bold;color:#80708f;letter-spacing:-0.5px;font-family:'Liberation Sans';">TRANSACTION</div>
<div class="a" style="left:645.0px;top:1150.1px;font-size:18px;font-weight:bold;color:#80708f;letter-spacing:-0.4px;font-family:'Liberation Sans';">PROJECT</div>
<div class="a" style="left:877.0px;top:1150.1px;font-size:18px;font-weight:bold;color:#80708f;letter-spacing:-0.4px;font-family:'Liberation Sans';">LAST SEEN</div>
<div class="a" style="right:1049.0px;top:1150.1px;font-size:18px;font-weight:bold;color:#80708f;letter-spacing:0.8px;text-align:right;margin-right:-0.8px">P50()</div>
<div class="a" style="right:804.0px;top:1150.1px;font-size:18px;font-weight:bold;color:#80708f;letter-spacing:0.8px;text-align:right;margin-right:-0.8px">P75()</div>
<div class="a" style="right:558.5px;top:1150.1px;font-size:18px;font-weight:bold;color:#80708f;letter-spacing:0.8px;text-align:right;margin-right:-0.8px">P95()</div>
<div class="a" style="right:313.5px;top:1150.1px;font-size:18px;font-weight:bold;color:#80708f;letter-spacing:0.8px;text-align:right;margin-right:-0.8px">P99()</div>
<div class="a" style="right:91.0px;top:1150.1px;font-size:18px;font-weight:bold;color:#80708f;letter-spacing:0.5px;text-align:right;margin-right:-0.5px">COUNT()</div>
<svg class="ico" style="left:2459px;top:1149px" width="14" height="18" viewBox="0 0 14 18"><path d="M7 1 V16.5 M1.5 11 L7 16.5 L12.5 11" fill="none" stroke="#80708f" stroke-width="2" stroke-linecap="round" stroke-linejoin="round"/></svg>
<div class="a n" style="left:181.0px;top:1214.0px;font-size:21px;font-weight:normal;color:#2562d4;letter-spacing:1.2px;font-family:'Liberation Sans';">product_info</div>
<svg class="ico" style="left:644px;top:1214px" width="24" height="24" viewBox="0 0 24 24"><rect width="24" height="24" rx="4.2" fill="#39a6be"/><path d="M2.2 7.5 L10.8 4.2 L11.2 9.5 C11.6 13 13 15.6 16.2 16.6 L21.8 16.8 C20.6 18.8 17.5 20 14.5 20 C11 20 8.6 18.4 7.1 16.5 Z" fill="#fff"/><path d="M4.0 12.0 L11.6 9.4 M5.4 15.2 L12.2 12.9" stroke="#39a6be" stroke-width="1.1"/></svg>
<div class="a n" style="left:677.0px;top:1214.0px;font-size:21px;font-weight:normal;color:#2562d4;letter-spacing:0.3px;font-family:'Liberation Sans';">flask</div>
<div class="a n" style="left:876.0px;top:1214.0px;font-size:21px;font-weight:normal;color:#2f213a;letter-spacing:0.1px;font-family:'Liberation Sans';">Sep 4, 2024 4:28:28 PM EDT</div>
<div class="a n" style="right:1048.0px;top:1214.0px;font-size:21px;font-weight:normal;color:#2f213a;letter-spacing:1.0px;text-align:right;margin-right:-1px">551.00ms</div>
<div class="a n" style="right:803.0px;top:1214.0px;font-size:21px;font-weight:normal;color:#2f213a;letter-spacing:1.0px;text-align:right;margin-right:-1px">552.00ms</div>
<div class="a n" style="right:558.0px;top:1214.0px;font-size:21px;font-weight:normal;color:#2f213a;letter-spacing:1.0px;text-align:right;margin-right:-1px">554.00ms</div>
<div class="a n" style="right:313.0px;top:1214.0px;font-size:21px;font-weight:normal;color:#2f213a;letter-spacing:1.0px;text-align:right;margin-right:-1px">594.00ms</div>
<div class="a n" style="right:70.0px;top:1214.0px;font-size:21px;font-weight:normal;color:#2f213a;letter-spacing:1.0px;text-align:right;margin-right:-1px">93k</div>
<div class="a n" style="left:181.0px;top:1278.0px;font-size:21px;font-weight:normal;color:#2562d4;letter-spacing:1.2px;font-family:'Liberation Sans';">products_join</div>
<svg class="ico" style="left:644px;top:1278px" width="24" height="24" viewBox="0 0 24 24"><rect width="24" height="24" rx="4.2" fill="#39a6be"/><path d="M2.2 7.5 L10.8 4.2 L11.2 9.5 C11.6 13 13 15.6 16.2 16.6 L21.8 16.8 C20.6 18.8 17.5 20 14.5 20 C11 20 8.6 18.4 7.1 16.5 Z" fill="#fff"/><path d="M4.0 12.0 L11.6 9.4 M5.4 15.2 L12.2 12.9" stroke="#39a6be" stroke-width="1.1"/></svg>
<div class="a n" style="left:677.0px;top:1278.0px;font-size:21px;font-weight:normal;color:#2562d4;letter-spacing:0.3px;font-family:'Liberation Sans';">flask</div>
<div class="a n" style="left:876.0px;top:1278.0px;font-size:21px;font-weight:normal;color:#2f213a;letter-spacing:0.1px;font-family:'Liberation Sans';">Sep 4, 2024 4:30:20 PM EDT</div>
<div class="a n" style="right:1048.0px;top:1278.0px;font-size:21px;font-weight:normal;color:#2f213a;letter-spacing:1.0px;text-align:right;margin-right:-1px">310.00ms</div>
<div class="a n" style="right:803.0px;top:1278.0px;font-size:21px;font-weight:normal;color:#2f213a;letter-spacing:1.0px;text-align:right;margin-right:-1px">388.00ms</div>
<div class="a n" style="right:558.0px;top:1278.0px;font-size:21px;font-weight:normal;color:#2f213a;letter-spacing:1.0px;text-align:right;margin-right:-1px">717.00ms</div>
<div class="a n" style="right:313.0px;top:1278.0px;font-size:21px;font-weight:normal;color:#2f213a;letter-spacing:1.0px;text-align:right;margin-right:-1px">965.20ms</div>
<div class="a n" style="right:70.0px;top:1278.0px;font-size:21px;font-weight:normal;color:#2f213a;letter-spacing:1.0px;text-align:right;margin-right:-1px">3.9k</div>
<div class="a n" style="left:181.0px;top:1342.0px;font-size:21px;font-weight:normal;color:#2562d4;letter-spacing:1.2px;font-family:'Liberation Sans';">products</div>
<svg class="ico" style="left:644px;top:1342px" width="24" height="24" viewBox="0 0 24 24"><rect width="24" height="24" rx="4.2" fill="#39a6be"/><path d="M2.2 7.5 L10.8 4.2 L11.2 9.5 C11.6 13 13 15.6 16.2 16.6 L21.8 16.8 C20.6 18.8 17.5 20 14.5 20 C11 20 8.6 18.4 7.1 16.5 Z" fill="#fff"/><path d="M4.0 12.0 L11.6 9.4 M5.4 15.2 L12.2 12.9" stroke="#39a6be" stroke-width="1.1"/></svg>
<div class="a n" style="left:677.0px;top:1342.0px;font-size:21px;font-weight:normal;color:#2562d4;letter-spacing:0.3px;font-family:'Liberation Sans';">flask</div>
<div class="a n" style="left:876.0px;top:1342.0px;font-size:21px;font-weight:normal;color:#2f213a;letter-spacing:0.1px;font-family:'Liberation Sans';">Sep 4, 2024 4:29:48 PM EDT</div>
<div class="a n" style="right:1048.0px;top:1342.0px;font-size:21px;font-weight:normal;color:#2f213a;letter-spacing:1.0px;text-align:right;margin-right:-1px">1.70s</div>
<div class="a n" style="right:803.0px;top:1342.0px;font-size:21px;font-weight:normal;color:#2f213a;letter-spacing:1.0px;text-align:right;margin-right:-1px">1.75s</div>
<div class="a n" style="right:558.0px;top:1342.0px;font-size:21px;font-weight:normal;color:#2f213a;letter-spacing:1.0px;text-align:right;margin-right:-1px">1.78s</div>
<div class="a n" style="right:313.0px;top:1342.0px;font-size:21px;font-weight:normal;color:#2f213a;letter-spacing:1.0px;text-align:right;margin-right:-1px">1.80s</div>
<div class="a n" style="right:70.0px;top:1342.0px;font-size:21px;font-weight:normal;color:#2f213a;letter-spacing:1.0px;text-align:right;margin-right:-1px">3.2k</div>
</body></html>
